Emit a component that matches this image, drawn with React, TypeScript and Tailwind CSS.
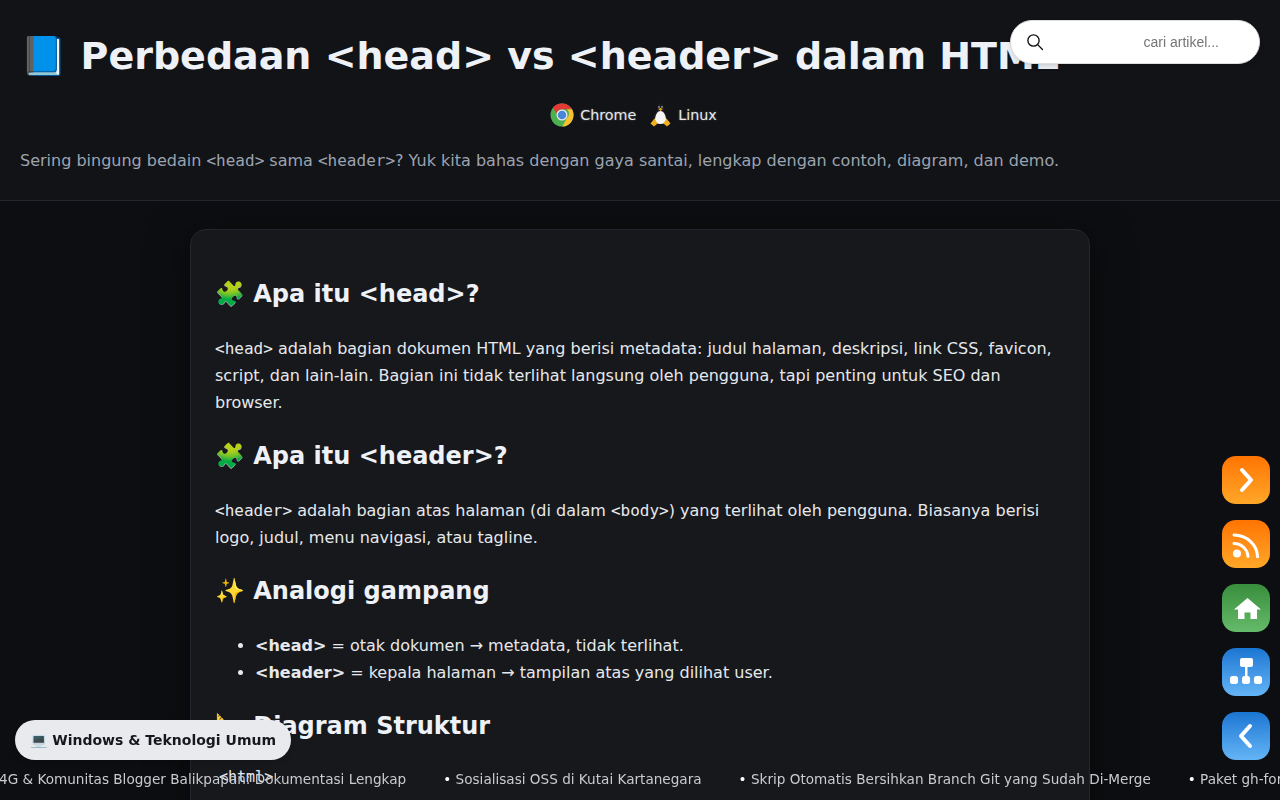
import React from "react";

const font = { fontFamily: '"DejaVu Sans", "Noto Color Emoji", sans-serif' };
const mono = { fontFamily: '"DejaVu Sans Mono", monospace' };

function Code({ children }: { children: React.ReactNode }) {
  return <code className="text-base" style={mono}>{children}</code>;
}

function Chrome() {
  return (
    <svg width="24" height="24" viewBox="0 0 48 48" className="shrink-0">
      <circle cx="24" cy="24" r="23" fill="#4caf50" />
      <path d="M24 1a23 23 0 0 1 20 11.500H24a11.500 11.500 0 0 0-10.900 7.800L5.600 9.600A23 23 0 0 1 24 1z" fill="#e53935" />
      <path d="M44 12.500a23 23 0 0 1-19.500 34.500L34 30a11.500 11.500 0 0 0 0-17.500z" fill="#fbc02d" />
      <circle cx="24" cy="24" r="11" fill="#e8eaf0" />
      <circle cx="24" cy="24" r="8.500" fill="#4a86d8" />
    </svg>
  );
}

function Tux() {
  return (
    <svg width="21" height="24" viewBox="0 0 42 48" className="shrink-0">
      <path d="M21 1c-5 0-7 4-7 9 0 4-1 7-4 12-3 5-5 10-4 15l30 0c1-5-1-10-4-15-3-5-4-8-4-12 0-5-2-9-7-9z" fill="#1c1c22" />
      <path d="M21 16c-7 0-11 10-11 18 0 5 4 8 11 8s11-3 11-8c0-8-4-18-11-18z" fill="#f6f6f6" />
      <path d="M16.500 12 L21 10 L25.500 12 L21 16z" fill="#e8a818" />
      <circle cx="18" cy="8" r="1.500" fill="#eee" />
      <circle cx="24" cy="8" r="1.500" fill="#eee" />
      <path d="M1 41l8-10 6 10-7 6z" fill="#f0b020" />
      <path d="M41 41l-8-10-6 10 7 6z" fill="#f0b020" />
    </svg>
  );
}

function SideButton({ className, children }: { className: string; children: React.ReactNode }) {
  return <div className={`flex h-12 w-12 items-center justify-center rounded-[14px] ${className}`}>{children}</div>;
}

function Heading({ icon, children }: { icon: string; children: React.ReactNode }) {
  return (
    <h2 className="mb-[25px] mt-[25px] text-2xl font-bold leading-[31px] text-[#eef1f6]">
      {icon} {children}
    </h2>
  );
}

const ticker = [
  "Sosialisasi OSS di Kutai Kartanegara",
  "Skrip Otomatis Bersihkan Branch Git yang Sudah Di-Merge",
  "Paket gh-for-windows",
];

export default function App() {
  return (
    <div className="h-screen overflow-hidden bg-[#0d0e11] text-[#e6e8ec]" style={font}>
      <header className="relative z-10 h-[201px] border-b border-[#24262e] bg-[#111317] px-5 pt-[30px]">
        <h1 className="whitespace-nowrap text-[38px] font-bold leading-[52px] text-[#eef1f6]">📘 Perbedaan &lt;head&gt; vs &lt;header&gt; dalam HTML</h1>
        <div className="mt-[21px] flex h-6 items-center justify-center gap-[14px] pr-[13px] text-[14.300px] text-[#e6e8ec] [text-shadow:0_0_2px_rgba(255,255,255,0.35)]">
          <span className="flex items-center gap-[6px]"><Chrome /><span className="pt-px">Chrome</span></span>
          <span className="flex items-center gap-[7px]"><Tux /><span className="pt-px">Linux</span></span>
        </div>
        <p className="mt-[22px] text-base leading-6 text-[#9ca3af]">Sering bingung bedain <Code>&lt;head&gt;</Code> sama <Code>&lt;header&gt;</Code>? Yuk kita bahas dengan gaya santai, lengkap dengan contoh, diagram, dan demo.</p>
      </header>

      <main className="mx-auto mt-7 h-[700px] w-[900px] rounded-2xl border border-[#23262c] bg-[#16181c] px-6 pt-6 text-base leading-[27px] shadow-[0_8px_40px_rgba(0,0,0,0.5)]">
        <Heading icon="🧩">Apa itu &lt;head&gt;?</Heading>
        <p><Code>&lt;head&gt;</Code> adalah bagian dokumen HTML yang berisi metadata: judul halaman, deskripsi, link CSS, favicon, script, dan lain-lain. Bagian ini tidak terlihat langsung oleh pengguna, tapi penting untuk SEO dan browser.</p>
        <Heading icon="🧩">Apa itu &lt;header&gt;?</Heading>
        <p><Code>&lt;header&gt;</Code> adalah bagian atas halaman (di dalam <Code>&lt;body&gt;</Code>) yang terlihat oleh pengguna. Biasanya berisi logo, judul, menu navigasi, atau tagline.</p>
        <Heading icon="✨">Analogi gampang</Heading>
        <ul className="list-disc pl-10">
          <li><b>&lt;head&gt;</b> = otak dokumen → metadata, tidak terlihat.</li>
          <li><b>&lt;header&gt;</b> = kepala halaman → tampilan atas yang dilihat user.</li>
        </ul>
        <Heading icon="📐">Diagram Struktur</Heading>
        <pre className="mt-1 pl-1 text-[15px] leading-5" style={mono}>&lt;html&gt;</pre>
      </main>

      <div className="fixed right-5 top-5 z-20 flex h-11 w-[250px] items-center rounded-[22px] border border-[#ddd] bg-white pl-[15px] pr-10 shadow-md">
        <svg width="18" height="18" viewBox="0 0 24 24" fill="none" stroke="#111" strokeWidth="1.800" strokeLinecap="round" className="shrink-0"><circle cx="10" cy="10" r="7.500" /><path d="M15.500 15.500L22 22" /></svg>
        <span className="ml-auto text-sm text-[#757575]" style={{ fontFamily: '"Liberation Sans", sans-serif' }}>cari artikel...</span>
      </div>

      <div className="fixed right-[10px] top-[456px] z-20 flex flex-col gap-4">
        <SideButton className="bg-gradient-to-b from-[#ff7300] to-[#ffa726]">
          <svg width="24" height="28" viewBox="0 0 24 28" fill="none" stroke="#fff" strokeWidth="4" strokeLinecap="round" strokeLinejoin="round"><path d="M8 4l9 10-9 10" /></svg>
        </SideButton>
        <SideButton className="bg-gradient-to-b from-[#ff7300] to-[#ffa726]">
          <svg width="27" height="25" viewBox="0 0 27 25" fill="none" stroke="#fff" strokeWidth="3" strokeLinecap="round" className="mt-[3px] -translate-x-px"><circle cx="5" cy="20.500" r="4" fill="#fff" stroke="none" /><path d="M2 10.500a14 14 0 0 1 14 13" /><path d="M2 2a24 22 0 0 1 23.500 22" /></svg>
        </SideButton>
        <SideButton className="bg-gradient-to-b from-[#388e3c] to-[#66bb6a]">
          <svg width="27" height="21" viewBox="0 0 27 21" fill="#fff" className="translate-x-px"><path d="M13.500 0L0 11.500h4V21h6.500v-6.500h6V21H23V11.500h4z" /></svg>
        </SideButton>
        <SideButton className="bg-gradient-to-b from-[#1976d2] to-[#64b5f6]">
          <svg width="32" height="26" viewBox="0 0 32 26" fill="#fff" className="-translate-y-px"><rect x="10" y="0" width="13" height="9" rx="2" /><rect x="15" y="8" width="2.500" height="11" /><rect x="0" y="18" width="8" height="8" rx="2.500" /><rect x="12" y="18" width="8" height="8" rx="2.500" /><rect x="24" y="18" width="8" height="8" rx="2.500" /></svg>
        </SideButton>
        <SideButton className="bg-gradient-to-b from-[#1976d2] to-[#64b5f6]">
          <svg width="24" height="28" viewBox="0 0 24 28" fill="none" stroke="#fff" strokeWidth="4" strokeLinecap="round" strokeLinejoin="round"><path d="M16 4L7 14l9 10" /></svg>
        </SideButton>
      </div>

      <div className="fixed bottom-[40px] left-[15px] z-20 flex h-10 w-[276px] items-center justify-center whitespace-nowrap rounded-[20px] bg-[#e8eaed] text-sm font-bold text-[#16181d] shadow-md">💻 Windows &amp; Teknologi Umum</div>

      <div className="fixed bottom-[11px] left-0 z-20 flex h-5 w-full items-center overflow-hidden whitespace-nowrap text-[13.600px] leading-5 text-[#c9cbcf]">
        <span className="-ml-px shrink-0">4G &amp; Komunitas Blogger Balikpapan: Dokumentasi Lengkap</span>
        {ticker.map((t) => (
          <span key={t} className="ml-[37px] shrink-0"><span className="text-white">•</span> {t}</span>
        ))}
      </div>
    </div>
  );
}
